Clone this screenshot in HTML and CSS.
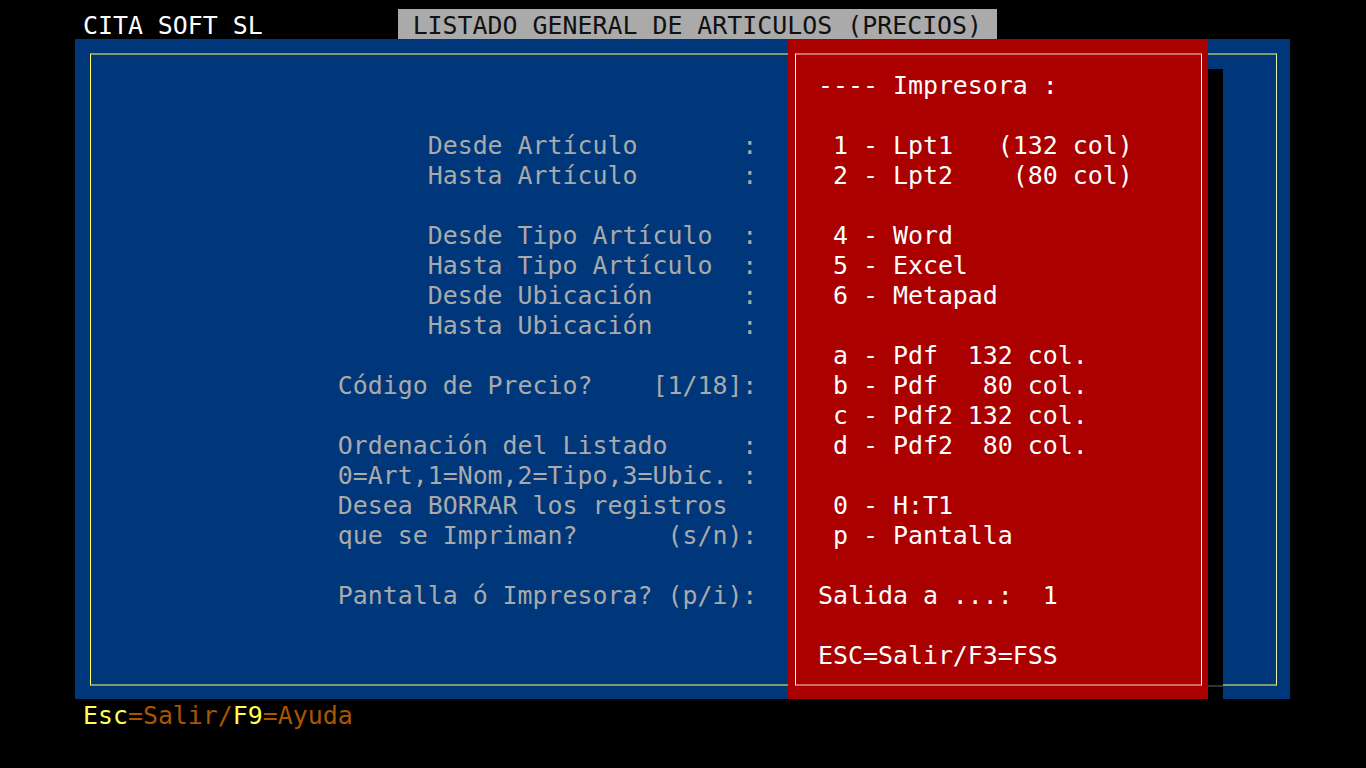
FILE: index.html
```html
<!DOCTYPE html>
<html lang="es">
<head>
<meta charset="utf-8">
<title>LISTADO GENERAL DE ARTICULOS (PRECIOS)</title>
<link rel="stylesheet" href="styles.css">
</head>
<body>
<div class="screen">
<pre class="topbar">     <span class="company">CITA SOFT SL</span>         <span class="title"> LISTADO GENERAL DE ARTICULOS (PRECIOS) </span></pre>
<div class="main">
<div class="frame">
<pre class="form">


                      Desde Artículo       :
                      Hasta Artículo       :

                      Desde Tipo Artículo  :
                      Hasta Tipo Artículo  :
                      Desde Ubicación      :
                      Hasta Ubicación      :

                Código de Precio?    [1/18]:

                Ordenación del Listado     :
                0=Art,1=Nom,2=Tipo,3=Ubic. :
                Desea BORRAR los registros
                que se Impriman?      (s/n):

                Pantalla ó Impresora? (p/i):</pre>
</div>
<div class="shadow"></div>
<div class="popup">
<div class="popup-frame">
<pre class="menu">---- Impresora :

 1 - Lpt1   (132 col)
 2 - Lpt2    (80 col)

 4 - Word
 5 - Excel
 6 - Metapad

 a - Pdf  132 col.
 b - Pdf   80 col.
 c - Pdf2 132 col.
 d - Pdf2  80 col.

 0 - H:T1
 p - Pantalla

Salida a ...:  1

ESC=Salir/F3=FSS</pre>
</div>
</div>
</div>
<pre class="footer">     <span class="key">Esc</span><span class="desc">=Salir/</span><span class="key">F9</span><span class="desc">=Ayuda</span></pre>
</div>
</body>
</html>
```
FILE: styles.css
```css
html, body {
  margin: 0;
  padding: 0;
  background: #000;
}

.screen {
  width: 1366px;
  height: 768px;
  padding-top: 9px;
  box-sizing: border-box;
  font-family: "DejaVu Sans Mono", "Liberation Mono", monospace;
  font-size: 24.9px;
  line-height: 30px;
  overflow: hidden;
}

pre {
  margin: 0;
  font: inherit;
  line-height: 30px;
}

.topbar {
  height: 30px;
  padding-left: 8px;
  color: #fff;
  overflow: hidden;
}

.company {
  display: inline-block;
  height: 30px;
  padding-top: 2px;
  box-sizing: border-box;
  vertical-align: top;
}

.title {
  background: #aaaaaa;
  color: #111;
  display: inline-block;
  height: 30px;
  padding-top: 2px;
  box-sizing: border-box;
  vertical-align: top;
  overflow: hidden;
}

.main {
  position: relative;
  margin-left: 75px;
  width: 1215px;
  height: 660px;
  background: #00377a;
  padding: 14px 13px 13px 15px;
  box-sizing: border-box;
}

.frame {
  height: 633px;
  box-sizing: border-box;
  border-top: 2px solid #7f9b6b;
  border-bottom: 2px solid #7f9b6b;
  border-left: 1px solid #ffff55;
  border-right: 1px solid #e8f0a0;
}

.form {
  color: #aaaaaa;
  padding-left: 7px;
  padding-top: 16px;
}

.shadow {
  position: absolute;
  left: 1133px;
  top: 30px;
  width: 15px;
  height: 630px;
  background: #000;
}

.shadow::after {
  content: "";
  position: absolute;
  left: 0;
  right: 0;
  top: 616px;
  height: 2px;
  background: #333;
}

.popup {
  position: absolute;
  left: 713px;
  top: 0;
  width: 420px;
  height: 660px;
  background: #aa0000;
  padding: 14px 6px 13px 7px;
  box-sizing: border-box;
}

.popup-frame {
  height: 633px;
  box-sizing: border-box;
  border-top: 2px solid #d06a6a;
  border-bottom: 2px solid #d06a6a;
  border-left: 1px solid #ffffff;
  border-right: 1px solid #ffffff;
}

.menu {
  color: #ffffff;
  padding-left: 22px;
  padding-top: 16px;
}

.footer {
  height: 30px;
  padding-left: 8px;
  padding-top: 2px;
  box-sizing: border-box;
}

.key {
  color: #ffff55;
}

.desc {
  color: #aa5500;
}
```
